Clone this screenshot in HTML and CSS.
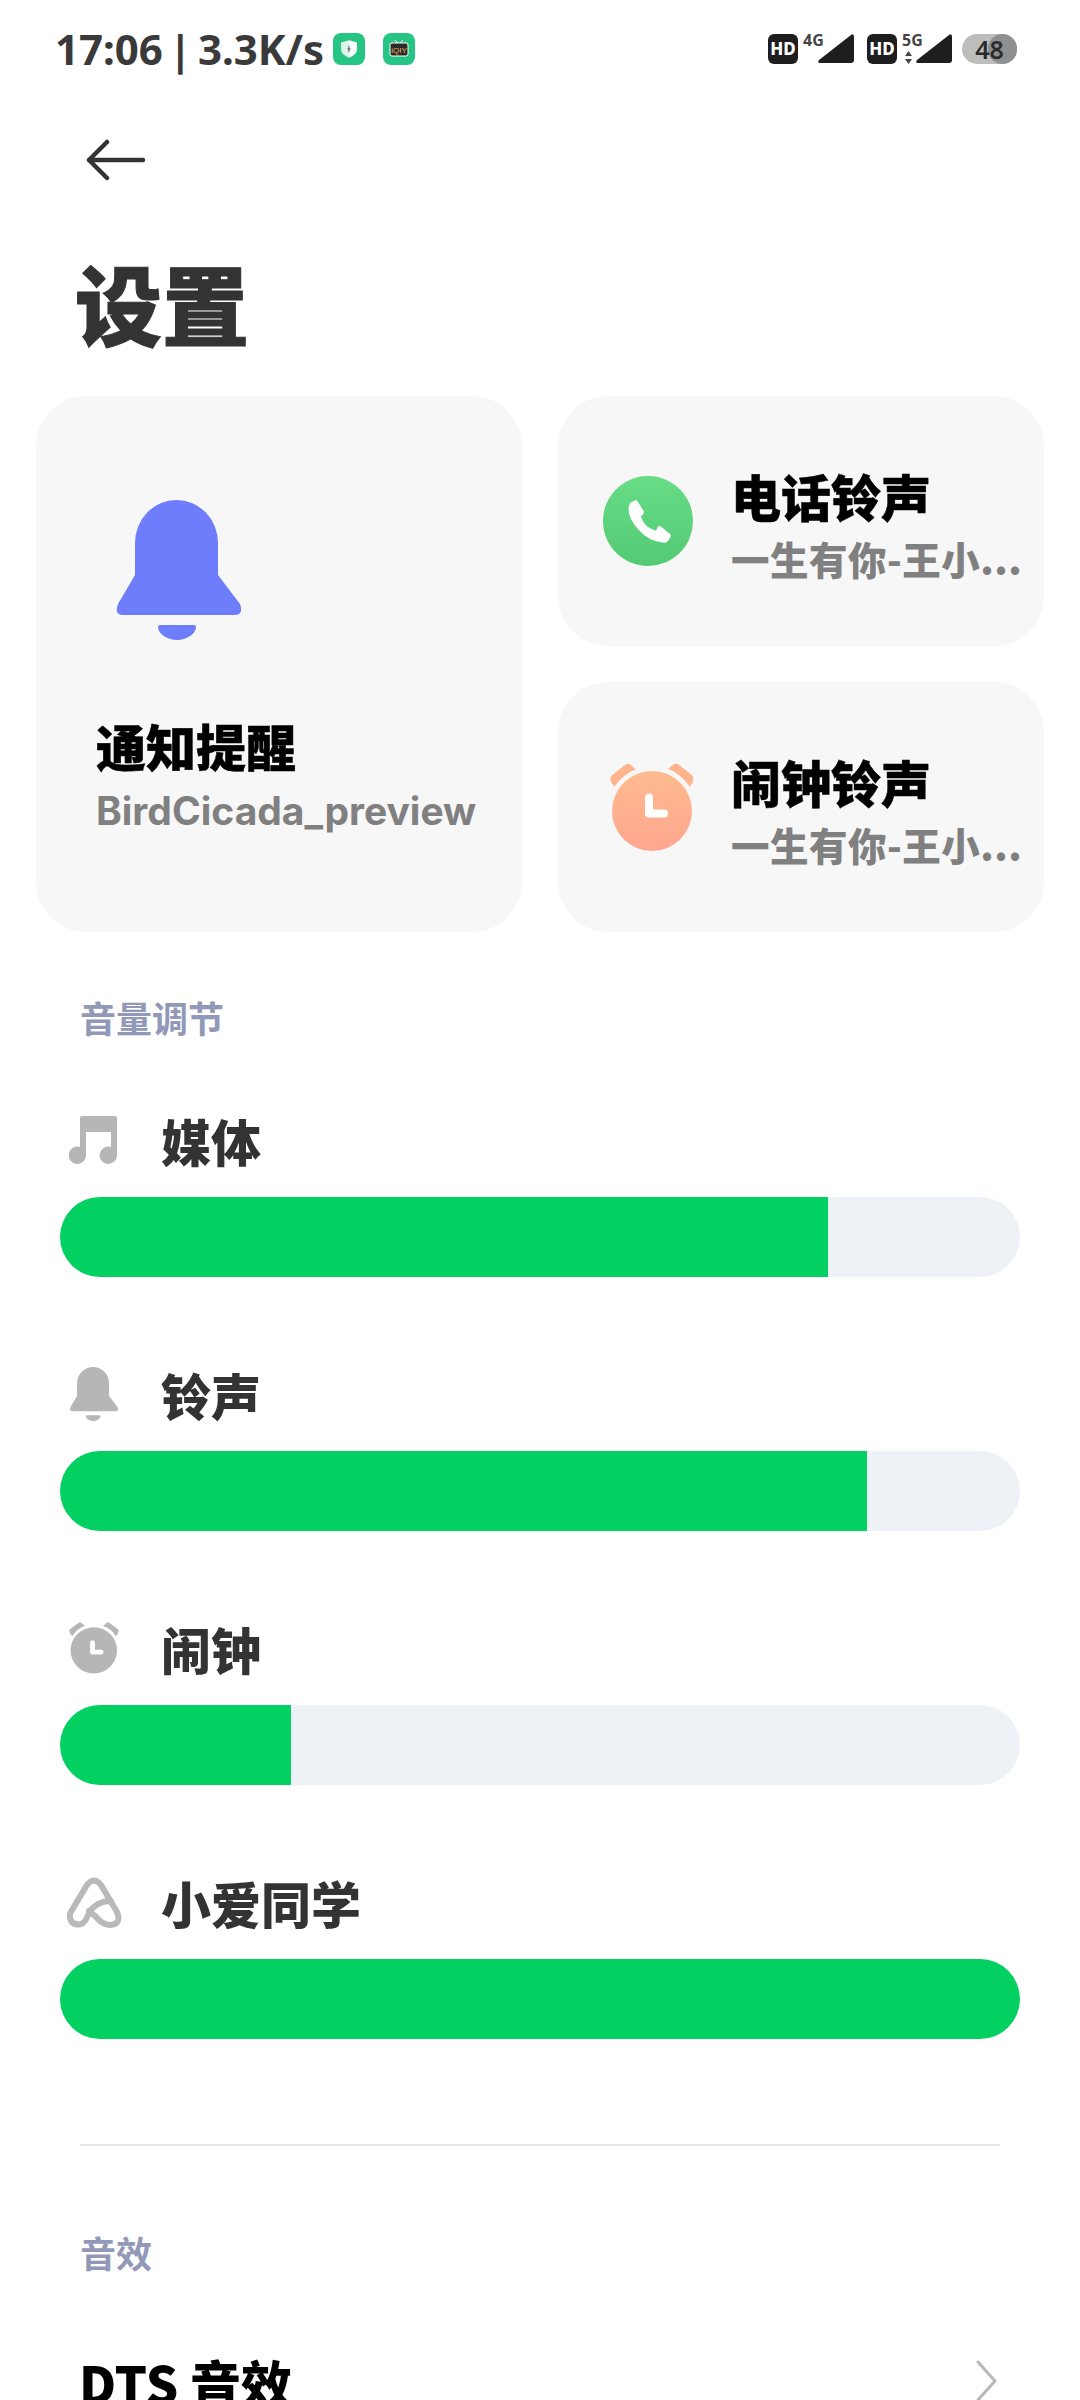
FILE: index.html
```html
<!DOCTYPE html>
<html lang="zh">
<head>
    <meta charset="UTF-8">
    <meta name="viewport" content="width=device-width, initial-scale=1.0">
    <title>设置</title>
    <link rel="stylesheet" href="styles.css">
</head>
<body>

    <div class="status-bar">
        <div class="status-left">
            <span class="status-time">17:06 | 3.3K/s</span>
            <span class="app-badge">
                <svg width="16" height="18" viewBox="0 0 20 22">
                    <path d="M10 0 L20 3 V11 Q20 18 10 22 Z" fill="#fff"/>
                    <path d="M10 0 L0 3 V11 Q0 18 10 22 Z" fill="#d9f5ea"/>
                    <path d="M10 7 V15 M8 11 H12" stroke="#333" stroke-width="1"/>
                </svg>
            </span>
            <span class="app-badge app-badge-tv">
                <svg width="20" height="18" viewBox="0 0 20 18">
                    <path d="M6 0 L9 3 M14 0 L11 3" stroke="#fff" stroke-width="1" fill="none"/>
                    <rect x="1" y="3" width="18" height="13" rx="2" fill="#2b2b2b" stroke="#fff" stroke-width="1"/>
                    <text class="tv-text" x="10" y="12.5" text-anchor="middle">iQIY</text>
                </svg>
            </span>
        </div>
        <div class="status-right">
            <span class="hd-box">HD</span>
            <span class="signal">
                <span class="signal-type">4G</span>
                <svg class="signal-bars" width="37" height="30" viewBox="0 0 37 30">
                    <path d="M34 1 Q37 -1 37 3 V26 Q37 29 34 29 H3 Q0 29 2 26 Z"/>
                </svg>
            </span>
            <span class="hd-box hd-second">HD</span>
            <span class="signal signal-5g">
                <span class="signal-type">5G</span>
                <svg class="signal-arrows" width="7" height="13" viewBox="0 0 7 13">
                    <path d="M3.5 0 L7 5 H0 Z M0 8 H7 L3.5 13 Z"/>
                </svg>
                <svg class="signal-bars" width="37" height="30" viewBox="0 0 37 30">
                    <path d="M34 1 Q37 -1 37 3 V26 Q37 29 34 29 H3 Q0 29 2 26 Z"/>
                </svg>
            </span>
            <span class="battery"><span class="battery-level">48</span></span>
        </div>
    </div>

    <div class="toolbar">
        <svg width="60" height="42" viewBox="0 0 60 42">
            <path d="M57 21 H3 M21 3 L3 21 L21 39" fill="none" stroke="#333" stroke-width="4.5" stroke-linecap="round" stroke-linejoin="round"/>
        </svg>
    </div>

    <h1 class="page-title">设置</h1>

    <div class="cards">
        <div class="card card-large">
            <svg class="card-large-icon" width="126" height="140" viewBox="0 0 126 140">
                <path fill="#6d7dfc" d="M19 43 A41.5 43 0 0 1 102 43 V75 L124 104 Q128 115 118 115 H7 Q-2 115 2 104 L19 75 Z"/>
                <path fill="#6d7dfc" d="M42 127 Q42 125 44 125 H78 Q80 125 80 127 C80 134 70 140 61 140 C52 140 42 134 42 127 Z"/>
            </svg>
            <div class="card-title">通知提醒</div>
            <div class="card-sub card-sub-latin">BirdCicada_preview</div>
        </div>
        <div class="card card-small">
            <svg class="card-icon" width="90" height="90" viewBox="0 0 89 84" preserveAspectRatio="none">
                <defs>
                    <linearGradient id="phoneBg" x1="0" y1="0" x2="0" y2="1">
                        <stop offset="0" stop-color="#68dc87"/>
                        <stop offset="1" stop-color="#54ca74"/>
                    </linearGradient>
                </defs>
                <ellipse cx="44.5" cy="42" rx="44.5" ry="42" fill="url(#phoneBg)"/>
                <path fill="#fff" d="M28 24.5 L32 22.7 Q33.5 22.5 34.5 24 L40.3 33 Q41 35 39.5 36 L37.3 37.5 Q39 43 43.5 47 Q47.5 50 52.5 51 L54 47.5 Q55 46 57 47 L66 54 Q67.5 55.5 66.5 57.5 L64.5 60.5 Q63 62.5 60 62.3 Q45 61 35 50 Q25 40 25.3 30.5 Q25.5 26 28 24.5 Z"/>
            </svg>
            <div class="card-text">
                <div class="card-title">电话铃声</div>
                <div class="card-sub">一生有你-王小...</div>
            </div>
        </div>
        <div class="card card-small">
            <svg class="card-icon" width="90" height="88" viewBox="-7 0 90 88">
                <defs>
                    <linearGradient id="alarmBg" x1="0" y1="0" x2="0" y2="1">
                        <stop offset="0" stop-color="#ffbb8e"/>
                        <stop offset="1" stop-color="#ffa68f"/>
                    </linearGradient>
                </defs>
                <path fill="#ffb48c" d="M1 13 L15 2 Q17.5 0 20 1 L25.6 6.4 Q13 11 4.6 23.6 Q-1 19 1 13 Z"/>
                <path fill="#ffb48c" d="M83 13 L69 2 Q66.5 0 64 1 L58 5.7 Q71 11 79.6 23.6 Q85 19 83 13 Z"/>
                <circle cx="42" cy="48" r="40" fill="url(#alarmBg)"/>
                <path d="M39 34.5 V50.5 H54" fill="none" stroke="#fff" stroke-width="8" stroke-linecap="round" stroke-linejoin="round"/>
            </svg>
            <div class="card-text">
                <div class="card-title">闹钟铃声</div>
                <div class="card-sub">一生有你-王小...</div>
            </div>
        </div>
    </div>

    <div class="section-label section-volume">音量调节</div>

    <div class="volume-list">
        <div class="volume-item">
            <div class="volume-head">
                <span class="volume-icon">
                    <svg class="icon-music" width="48" height="48" viewBox="0 0 48 48">
                        <path fill="#b6b6b6" d="M13 0 H46 Q48 0 48 2 V39 A8.7 8.7 0 1 1 42 31 V16 H17 V39 A8.7 8.7 0 1 1 11 31 V2 Q11 0 13 0 Z"/>
                    </svg>
                </span>
                <span class="volume-name">媒体</span>
            </div>
            <div class="volume-track"><div class="volume-fill" style="width: 768px"></div></div>
        </div>
        <div class="volume-item">
            <div class="volume-head">
                <span class="volume-icon">
                    <svg width="50" height="54" viewBox="0 0 126 140">
                        <path fill="#b6b6b6" d="M19 43 A41.5 43 0 0 1 102 43 V75 L124 104 Q128 115 118 115 H7 Q-2 115 2 104 L19 75 Z"/>
                        <path fill="#b6b6b6" d="M42 127 Q42 125 44 125 H78 Q80 125 80 127 C80 134 70 140 61 140 C52 140 42 134 42 127 Z"/>
                    </svg>
                </span>
                <span class="volume-name">铃声</span>
            </div>
            <div class="volume-track"><div class="volume-fill" style="width: 807px"></div></div>
        </div>
        <div class="volume-item">
            <div class="volume-head">
                <span class="volume-icon">
                    <svg width="50" height="54" viewBox="0 0 84 90">
                        <path fill="#b6b6b6" d="M1 14 L16 3 Q18 1 20 2 L27 8 Q13 12 6 25 Q-1 20 1 14 Z"/>
                        <path fill="#b6b6b6" d="M83 14 L68 3 Q66 1 64 2 L57 8 Q71 12 78 25 Q85 20 83 14 Z"/>
                        <ellipse cx="41.7" cy="49" rx="39" ry="39" fill="#b6b6b6"/>
                        <path d="M39.5 36 V52 H54" fill="none" stroke="#fff" stroke-width="8" stroke-linecap="round" stroke-linejoin="round"/>
                    </svg>
                </span>
                <span class="volume-name">闹钟</span>
            </div>
            <div class="volume-track"><div class="volume-fill" style="width: 231px"></div></div>
        </div>
        <div class="volume-item">
            <div class="volume-head">
                <span class="volume-icon">
                    <svg width="55" height="51" viewBox="0 0 55 51">
                        <path d="M14 47 Q5 49 3 41 Q2 37 5 33 L20 8 Q27 -1 34 8 L50 35 Q55 47 43 48 Q36 48 29 40 L22 34 M14 47 Q18 46 21 38 Q28 24 44 24" fill="none" stroke="#b9b9b9" stroke-width="6" stroke-linecap="round"/>
                    </svg>
                </span>
                <span class="volume-name">小爱同学</span>
            </div>
            <div class="volume-track"><div class="volume-fill" style="width: 960px"></div></div>
        </div>
    </div>

    <div class="divider"></div>

    <div class="section-label section-effects">音效</div>

    <div class="list-row">
        <span class="list-title">DTS 音效</span>
        <svg width="22" height="44" viewBox="0 0 22 44">
            <path d="M2 2 L19 21 L2 40" fill="none" stroke="#b8b8b8" stroke-width="3" stroke-linecap="round" stroke-linejoin="round"/>
        </svg>
    </div>

</body>
</html>
```

FILE: styles.css
```css
html, body {
    margin: 0;
    padding: 0;
}
body {
    width: 1080px;
    height: 2400px;
    overflow: hidden;
    background-color: #fff;
    color: #333;
    font-family: "Noto Sans CJK SC", "Noto Sans", sans-serif;
}

/* Status bar */
.status-bar {
    display: flex;
    justify-content: space-between;
    align-items: center;
    height: 98px;
    padding: 0 63px 0 55px;
}
.status-left {
    display: flex;
    align-items: center;
}
.status-time {
    width: 278px;
    font-family: "Noto Sans", sans-serif;
    font-size: 42px;
    font-weight: 700;
    line-height: 40px;
    word-spacing: -5px;
    color: #3a3a3a;
    white-space: nowrap;
}
.app-badge {
    display: flex;
    align-items: center;
    justify-content: center;
    width: 32px;
    height: 32px;
    background-color: #27c583;
    border-radius: 8px;
}
.app-badge-tv {
    margin-left: 18px;
}
.tv-text {
    fill: #f3b65a;
    font-family: "Liberation Sans", sans-serif;
    font-size: 8px;
}
.status-right {
    display: flex;
    align-items: center;
}
.hd-box {
    width: 30px;
    height: 30px;
    background-color: #1e1e1e;
    border-radius: 6px;
    color: #fff;
    font-family: "Noto Sans", sans-serif;
    font-size: 17px;
    font-weight: 800;
    line-height: 30px;
    text-align: center;
}
.hd-second {
    margin-left: 13px;
}
.signal {
    position: relative;
    width: 51px;
    height: 30px;
    margin-left: 5px;
}
.signal-5g {
    width: 50px;
}
.signal-type {
    position: absolute;
    left: 0;
    top: -2px;
    font-family: "Noto Sans", sans-serif;
    font-size: 16px;
    font-weight: 700;
    line-height: 16px;
    color: #444;
}
.signal-bars {
    position: absolute;
    right: 0;
    bottom: 0;
    fill: #1e1e1e;
}
.signal-arrows {
    position: absolute;
    left: 3px;
    bottom: 0;
    fill: #444;
}
.battery {
    position: relative;
    width: 55px;
    height: 30px;
    margin-left: 10px;
    background-color: #bdbdbd;
    border-radius: 15px;
}
.battery::after {
    content: "";
    position: absolute;
    top: 0;
    right: 0;
    width: 29px;
    height: 30px;
    background-color: #8f8f8f;
    border-radius: 15px;
}
.battery-level {
    position: relative;
    z-index: 1;
    display: block;
    color: #2b2b2b;
    font-family: "Noto Sans", sans-serif;
    font-size: 25px;
    font-weight: 600;
    line-height: 30px;
    text-align: center;
}

/* Header */
.toolbar {
    display: flex;
    align-items: center;
    height: 124px;
    padding-left: 86px;
}
.page-title {
    margin: 30px 0 0 75px;
    font-size: 87px;
    font-weight: 900;
    line-height: 100px;
    color: #333;
    -webkit-text-stroke: 1px #333;
}

/* Ringtone cards */
.cards {
    display: grid;
    grid-template-columns: 486px 486px;
    grid-template-rows: 250px 250px;
    column-gap: 36px;
    row-gap: 36px;
    margin: 44px 0 0 36px;
}
.card {
    background-color: #f7f7f7;
    border-radius: 50px;
}
.card-large {
    grid-row: span 2;
    padding: 104px 0 0 60px;
}
.card-large-icon {
    display: block;
    margin: 0 0 75px 20px;
}
.card-small {
    display: flex;
    align-items: center;
}
.card-icon {
    flex-shrink: 0;
    margin-left: 45px;
}
.card-text {
    margin-left: 38px;
    padding-top: 4px;
}
.card-title {
    font-size: 50px;
    font-weight: 900;
    line-height: 60px;
    color: #000;
    -webkit-text-stroke: 0.5px #000;
}
.card-sub {
    margin-top: 9px;
    font-size: 38.5px;
    font-weight: 900;
    line-height: 48px;
    letter-spacing: 0.5px;
    color: #808080;
    white-space: nowrap;
}
.card-sub-latin {
    margin-top: 12px;
    font-family: "Inter", sans-serif;
    font-size: 39px;
    font-weight: 700;
    letter-spacing: 0;
}

/* Volume sliders */
.section-label {
    margin-left: 80px;
    font-size: 36px;
    font-weight: 700;
    line-height: 50px;
    color: #9299b8;
}
.section-volume {
    margin-top: 60px;
}
.volume-list {
    display: flex;
    flex-direction: column;
    gap: 89px;
    margin: 70px 60px 0 60px;
}
.volume-head {
    display: flex;
    align-items: center;
    height: 60px;
    margin-bottom: 25px;
}
.volume-icon {
    display: flex;
    justify-content: center;
    width: 62px;
    margin: 0 36px 4px 3px;
}
.icon-music {
    margin-left: -3px;
}
.volume-name {
    margin-bottom: 5px;
    font-size: 50px;
    font-weight: 900;
    line-height: 60px;
    color: #333;
}
.volume-track {
    height: 80px;
    background-color: #eef1f6;
    border-radius: 40px;
    overflow: hidden;
}
.volume-fill {
    height: 100%;
    background-color: #02d061;
}

/* Sound effects */
.divider {
    height: 2px;
    margin: 105px 80px 0 80px;
    background-color: #e5e5e5;
}
.section-effects {
    margin-top: 81px;
}
.list-row {
    display: flex;
    justify-content: space-between;
    align-items: center;
    margin: 75px 82px 0 79px;
}
.list-title {
    font-size: 51px;
    font-weight: 900;
    line-height: 60px;
    color: #000;
}
```
